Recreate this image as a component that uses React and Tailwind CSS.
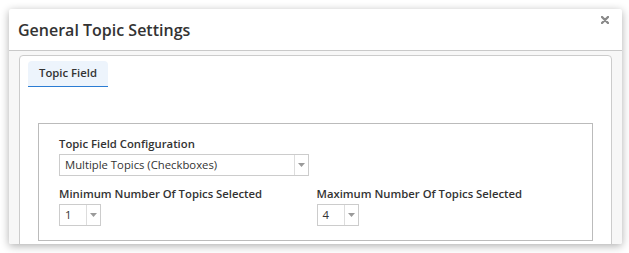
import React from "react";

function Caret() {
  return (
    <svg width="7" height="4" viewBox="0 0 7 4">
      <path d="M0 0 L7 0 L3.5 4 Z" fill="#9a9a9a" />
    </svg>
  );
}

function Select({ value, width }) {
  return (
    <div className={`flex h-[22px] border border-[#cccccc] bg-white ${width}`}>
      <div className="flex-1 pl-[5px] text-[11.3px] leading-[20px] text-[#333333] truncate">{value}</div>
      <div className="flex w-[14px] items-center justify-center border-l border-[#dddddd]">
        <Caret />
      </div>
    </div>
  );
}

export default function App() {
  return (
    <div
      className="w-[629px] h-[253px] bg-white pl-[9px] pt-[9px]"
      style={{ fontFamily: '"Open Sans", "Noto Sans", sans-serif' }}
    >
      <div className="flex h-[235px] w-[613px] flex-col overflow-hidden rounded-[2px] bg-white shadow-[0_2px_9px_rgba(0,0,0,0.32)]">
        {/* header */}
        <div className="relative h-[42px] shrink-0 border-b border-[#c9c9c9] px-[9px]">
          <h1 className="pt-[9px] text-[16px] font-semibold leading-[24px] text-[#333333]">General Topic Settings</h1>
          <button className="absolute right-[13px] top-[7px]" type="button">
            <svg width="8" height="8" viewBox="0 0 8 8">
              <path d="M1 1 L7 7 M7 1 L1 7" stroke="#8a8a8a" strokeWidth="2.4" strokeLinecap="round" />
            </svg>
          </button>
        </div>

        {/* body */}
        <div className="flex-1 bg-[#f7f7f7] px-[10px] pt-[4px]">
          <div className="h-[220px] rounded-[4px] border border-[#cccccc] bg-white px-[8px] pt-[5px]">
            <div className="flex">
              <div className="flex h-[26px] w-[80px] items-center justify-center rounded-t-[4px] border-b border-[#2b7cd3] bg-[#edf4fc] text-[11.3px] font-semibold text-[#333333]">
                Topic Field
              </div>
            </div>

            <div className="ml-[10px] mr-[10px] mt-[36px] border border-[#bbbbbb] px-[20px] pb-[14px] pt-[12px]">
              <label className="block text-[11.3px] font-semibold leading-[16px] text-[#333333]">Topic Field Configuration</label>
              <div className="mt-[2px]">
                <Select value="Multiple Topics (Checkboxes)" width="w-[250px]" />
              </div>

              <div className="mt-[10px] grid grid-cols-2">
                <div>
                  <label className="block text-[11.3px] font-semibold leading-[16px] text-[#333333]">Minimum Number Of Topics Selected</label>
                  <div className="mt-[2px]">
                    <Select value="1" width="w-[42px]" />
                  </div>
                </div>
                <div className="pl-[1px]">
                  <label className="block text-[11.3px] font-semibold leading-[16px] text-[#333333]">Maximum Number Of Topics Selected</label>
                  <div className="mt-[2px]">
                    <Select value="4" width="w-[42px]" />
                  </div>
                </div>
              </div>
            </div>
          </div>
        </div>
      </div>
    </div>
  );
}
